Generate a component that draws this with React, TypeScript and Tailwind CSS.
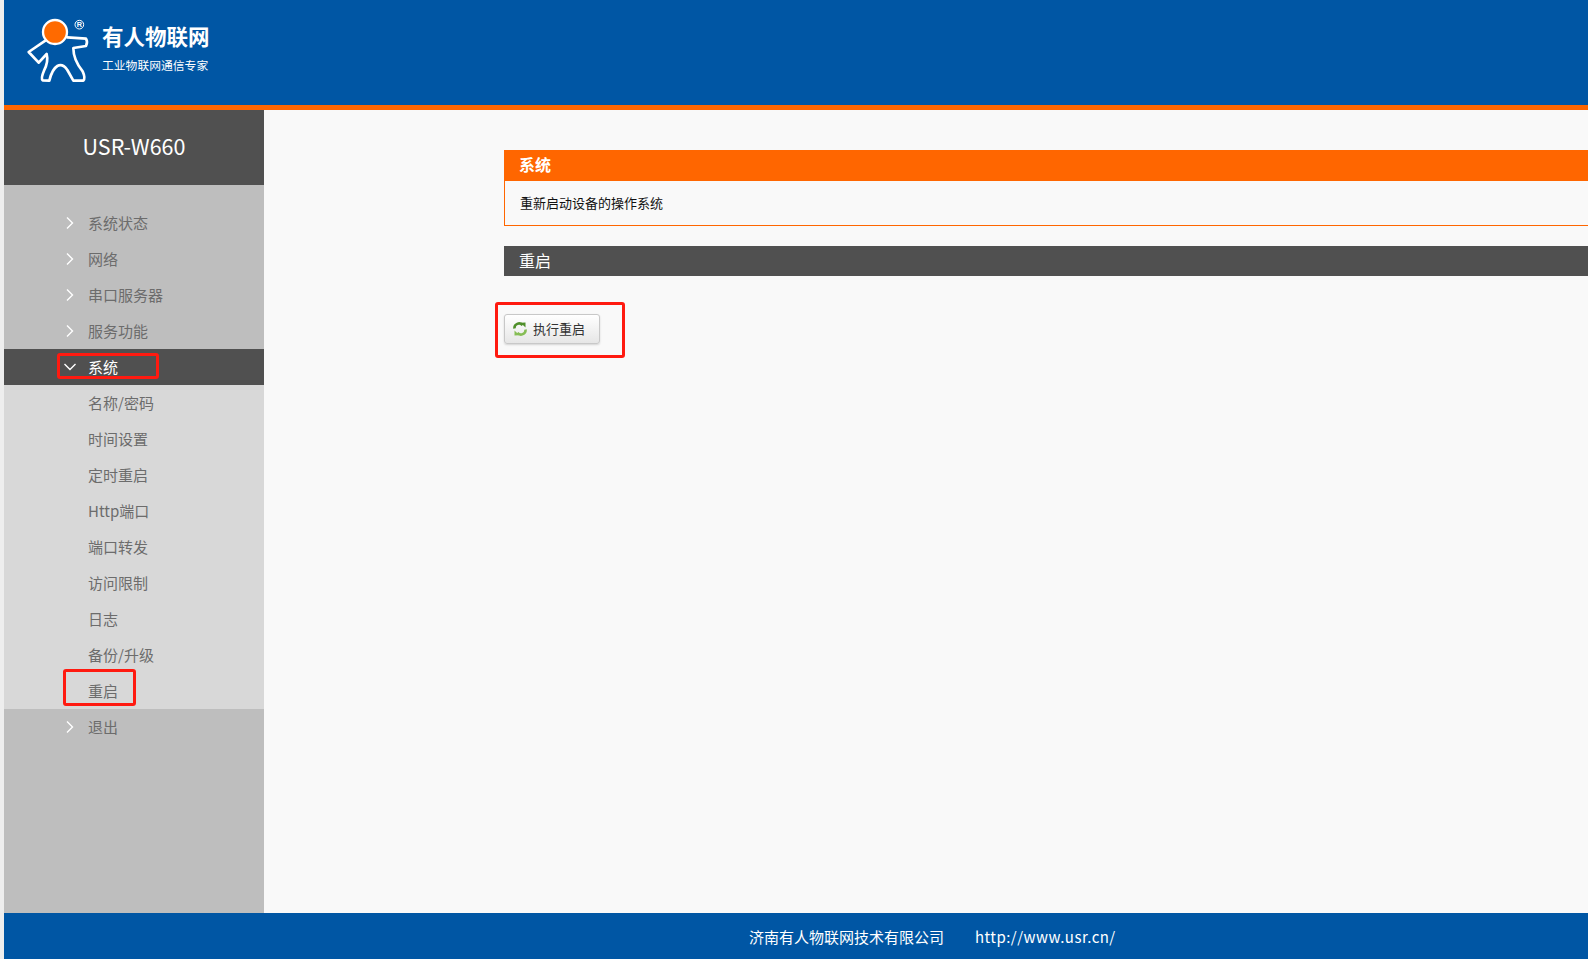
import React from "react";

const FONT = "font-['Noto_Sans_CJK_SC','Noto_Sans',sans-serif]";

function Chevron({ open }: { open?: boolean }) {
  return (
    <svg width="14" height="14" viewBox="0 0 14 14" className="shrink-0" fill="none">
      {open ? (
        <path d="M1.5 4 L7 9.5 L12.5 4" stroke="#fff" strokeWidth="1.4" />
      ) : (
        <path d="M4 1.5 L9.5 7 L4 12.5" stroke="#fff" strokeWidth="1.4" />
      )}
    </svg>
  );
}

function Row({ label, icon, active, sub }: { label: string; icon?: boolean; active?: boolean; sub?: boolean }) {
  return (
    <div
      className={`flex h-[36px] items-center pl-[59px] text-[15px] ${active ? "bg-[#505050] text-white" : "text-[#6c6c6c]"} ${sub ? "bg-[#d8d8d8]" : ""}`}
    >
      <span className="w-[25px] shrink-0">{icon || active ? <Chevron open={active} /> : null}</span>
      <span>{label}</span>
    </div>
  );
}

function Logo() {
  return (
    <svg width="100" height="80" viewBox="0 0 300 240" fill="none" className="shrink-0">
      <circle cx="105" cy="66" r="36" fill="#ff6a00" stroke="#fff" strokeWidth="7" />
      <path
        d="M76 92 L26 126 L56 158 L80 132 Q86 155 72 182 Q62 205 68 211 L88 212 Q96 178 112 168 Q128 160 142 180 L160 212 L190 212 Q197 204 188 184 Q160 150 160 114 L198 108 Q204 96 198 86 L142 82"
        stroke="#fff"
        strokeWidth="8"
        strokeLinejoin="round"
        strokeLinecap="round"
      />
      <circle cx="178" cy="44" r="13" stroke="#fff" strokeWidth="3" />
      <text x="178" y="52" textAnchor="middle" fontSize="22" fontWeight="700" fill="#fff" fontFamily="Liberation Sans, sans-serif">R</text>
    </svg>
  );
}

function Reload() {
  return (
    <svg width="14" height="14" viewBox="0 0 14 14" fill="none" className="shrink-0">
      <path d="M1.5 6.5 A4.5 4.5 0 0 1 9.5 3.2" stroke="#4f8f2a" strokeWidth="2.6" />
      <path d="M7.5 0.8 L12.5 0.5 L12.5 5.5 Z" fill="#4f8f2a" />
      <path d="M12.5 7.5 A4.5 4.5 0 0 1 4.5 10.8" stroke="#86bd55" strokeWidth="2.6" />
      <path d="M6.5 13.2 L1.5 13.5 L1.5 8.5 Z" fill="#86bd55" />
    </svg>
  );
}

function Mark({ className }: { className: string }) {
  return <div className={`absolute rounded-[3px] border-[3px] border-[#ff1a10] ${className}`} />;
}

export default function App() {
  return (
    <div className={`relative flex h-[959px] w-full overflow-hidden bg-[#eeeeee] pl-[4px] ${FONT}`}>
      <div className="flex min-w-0 flex-1 flex-col bg-[#f9f9f9]">
        <header className="flex h-[105px] shrink-0 items-start bg-[#0056a4] pl-[16px] pt-[10px] text-white">
          <Logo />
          <div className="ml-[-18px] flex flex-col pt-[12px]">
            <span className="text-[21.5px] font-bold leading-[28px]">有人物联网</span>
            <span className="mt-[7px] text-[11.8px] leading-[16px]">工业物联网通信专家</span>
          </div>
        </header>
        <div className="h-[5px] shrink-0 bg-[#ff6600]" />
        <div className="flex min-h-0 flex-1">
          <aside className="flex w-[260px] shrink-0 flex-col bg-[#bebebe]">
            <div className="flex h-[75px] shrink-0 items-center justify-center bg-[#505050] pb-[2px] text-[21.5px] text-white">
              USR-W660
            </div>
            <nav className="pt-[20px]">
              <Row label="系统状态" icon />
              <Row label="网络" icon />
              <Row label="串口服务器" icon />
              <Row label="服务功能" icon />
              <Row label="系统" active />
              {["名称/密码", "时间设置", "定时重启", "Http端口", "端口转发", "访问限制", "日志", "备份/升级", "重启"].map((s) => (
                <Row key={s} label={s} sub />
              ))}
              <Row label="退出" icon />
            </nav>
          </aside>
          <main className="min-w-0 flex-1 pl-[240px] pt-[40px]">
            <div className="flex h-[31px] items-center bg-[#ff6600] pb-[3px] pl-[15px] text-[16px] font-bold text-white">系统</div>
            <div className="flex h-[45px] items-center border-b border-l border-[#ff6600] pl-[15px] text-[13px] text-[#111111]">
              重新启动设备的操作系统
            </div>
            <div className="mt-[20px] flex h-[30px] items-center bg-[#505050] pb-[2px] pl-[15px] text-[16px] text-white">重启</div>
            <button className="mt-[38px] flex h-[30px] w-[96px] items-center rounded-[3px] border border-[#c8c8c8] bg-gradient-to-b from-white to-[#e6e6e6] pl-[8px] text-[13px] text-[#333333] shadow-[0_1px_2px_rgba(0,0,0,0.15)]">
              <Reload />
              <span className="ml-[6px]">执行重启</span>
            </button>
          </main>
        </div>
        <footer className="flex h-[46px] shrink-0 items-center bg-[#0056a4] pl-[745px] pt-[2px] text-[15px] text-white">
          <span>济南有人物联网技术有限公司</span>
          <span className="ml-[31px] tracking-[0.45px]">http://www.usr.cn/</span>
        </footer>
      </div>
      <Mark className="left-[57px] top-[353px] h-[26px] w-[102px]" />
      <Mark className="left-[63px] top-[669px] h-[37px] w-[73px]" />
      <Mark className="left-[495px] top-[302px] h-[56px] w-[130px]" />
    </div>
  );
}
